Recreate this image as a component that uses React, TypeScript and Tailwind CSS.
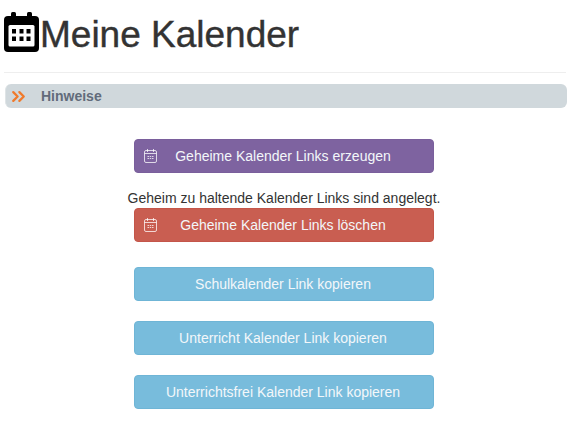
import { ChevronsRight } from 'lucide-react';

function BigCalendar() {
  return (
    <svg width="35" height="40" viewBox="0 0 35 40" className="mr-[1px] shrink-0">
      <rect x="7" y="0" width="5" height="8" rx="1.5" fill="#000" />
      <rect x="23" y="0" width="5" height="8" rx="1.5" fill="#000" />
      <rect x="0" y="4" width="35" height="36" rx="4" fill="#000" />
      <rect x="4.5" y="13" width="26" height="21.5" rx="1.5" fill="#fff" />
      <rect x="8" y="17" width="4" height="4.5" fill="#000" />
      <rect x="15.5" y="17" width="4" height="4.5" fill="#000" />
      <rect x="22.5" y="17" width="4" height="4.5" fill="#000" />
      <rect x="8" y="24.5" width="4" height="4.5" fill="#000" />
      <rect x="15.5" y="24.5" width="4" height="4.5" fill="#000" />
      <rect x="22.5" y="24.5" width="4" height="4.5" fill="#000" />
    </svg>
  );
}

function SmallCalendar() {
  return (
    <svg width="13" height="14" viewBox="0 0 13 14" fill="none" stroke="#fff" strokeOpacity="0.75" className="absolute left-[9px] top-[9px]">
      <rect x="0.5" y="1.5" width="12" height="12" rx="1.5" />
      <path d="M0.5 4.5h12M3.5 0v3M9.5 0v3" />
      <path d="M3.5 7.5h6M3.5 9.5h6" strokeDasharray="1.5 0.75" />
    </svg>
  );
}

type LinkButtonProps = {
  label: string;
  color: string;
  icon?: boolean;
};

function LinkButton({ label, color, icon }: LinkButtonProps) {
  return (
    <button className={`relative flex h-[34px] w-[300px] items-center justify-center rounded-[4px] border pr-[2px] text-[14px] text-[#f3f7fa] ${color}`}>
      {icon && <SmallCalendar />}
      {label}
    </button>
  );
}

export default function App() {
  return (
    <div className="min-h-[428px] bg-white px-[4px] font-['Liberation_Sans',Arial,sans-serif] text-[#333]">
      <h1 className="flex h-[72px] items-start pt-[12px] text-[37px] leading-[46px] text-[#333] [-webkit-text-stroke:0.4px_#333]">
        <BigCalendar />
        <span>Meine Kalender</span>
      </h1>
      <hr className="border-t border-[#eeeeee]" />
      <div className="ml-[1px] mr-[-1px] mt-[11px] flex h-[24px] items-center rounded-[6px] border-l border-[#dfe4e6] bg-[#d0d8dc] pl-[2px]">
        <ChevronsRight size={21} strokeWidth={2.6} className="text-[#f07a2c]" />
        <span className="ml-[12px] text-[14px] font-bold text-[#626b7a]">Hinweise</span>
      </div>
      <div className="mt-[31px] flex flex-col items-center pr-[2px]">
        <LinkButton label="Geheime Kalender Links erzeugen" color="border-[#7a5f9c] bg-[#7e63a0]" icon />
        <p className="mt-[16px] text-[14px] leading-[19px] text-[#333]">Geheim zu haltende Kalender Links sind angelegt.</p>
        <LinkButton label="Geheime Kalender Links löschen" color="border-[#c4564a] bg-[#c95e51]" icon />
        <div className="mt-[25px] flex flex-col gap-[20px]">
          <LinkButton label="Schulkalender Link kopieren" color="border-[#6fb5d6] bg-[#78bcdc]" />
          <LinkButton label="Unterricht Kalender Link kopieren" color="border-[#6fb5d6] bg-[#78bcdc]" />
          <LinkButton label="Unterrichtsfrei Kalender Link kopieren" color="border-[#6fb5d6] bg-[#78bcdc]" />
        </div>
      </div>
    </div>
  );
}
